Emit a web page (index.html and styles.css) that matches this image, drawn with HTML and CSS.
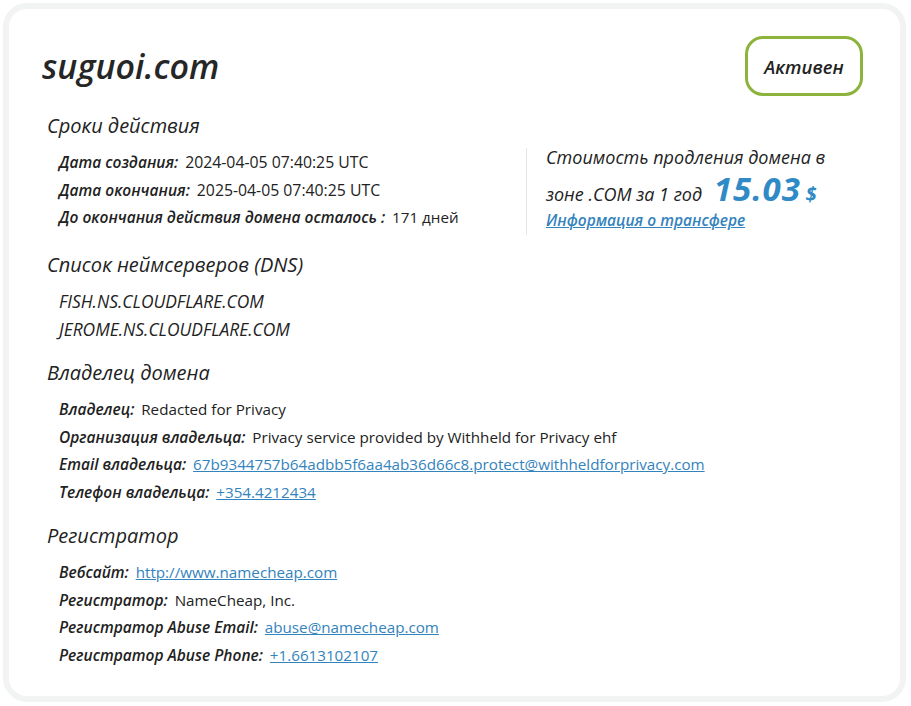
FILE: index.html
```html
<!DOCTYPE html>
<html lang="ru">
<head>
<meta charset="utf-8">
<title>suguoi.com</title>
<link rel="stylesheet" href="styles.css">
</head>
<body>
<div class="card">
  <div class="header">
    <h1 class="domain">suguoi.com</h1>
    <div class="status">Активен</div>
  </div>

  <section class="section">
    <h2 class="heading">Сроки действия</h2>
    <div class="split">
      <div class="rows">
        <div class="row"><span class="label">Дата создания:</span> <span class="value date">2024-04-05 07:40:25 UTC</span></div>
        <div class="row"><span class="label">Дата окончания:</span> <span class="value date">2025-04-05 07:40:25 UTC</span></div>
        <div class="row"><span class="label">До окончания действия домена осталось :</span> <span class="value">171 дней</span></div>
      </div>
      <div class="price">
        <div class="price-text">Стоимость продления домена в<br>зоне .COM за 1 год <span class="amount">15.03</span> <span class="currency">$</span></div>
        <a class="transfer" href="#">Информация о трансфере</a>
      </div>
    </div>
  </section>

  <section class="section">
    <h2 class="heading">Список неймсерверов (DNS)</h2>
    <div class="rows">
      <div class="row ns">FISH.NS.CLOUDFLARE.COM</div>
      <div class="row ns">JEROME.NS.CLOUDFLARE.COM</div>
    </div>
  </section>

  <section class="section">
    <h2 class="heading">Владелец домена</h2>
    <div class="rows">
      <div class="row"><span class="label">Владелец:</span> <span class="value">Redacted for Privacy</span></div>
      <div class="row"><span class="label">Организация владельца:</span> <span class="value">Privacy service provided by Withheld for Privacy ehf</span></div>
      <div class="row"><span class="label">Email владельца:</span> <a class="link" href="#">67b9344757b64adbb5f6aa4ab36d66c8.protect@withheldforprivacy.com</a></div>
      <div class="row"><span class="label">Телефон владельца:</span> <a class="link" href="#">+354.4212434</a></div>
    </div>
  </section>

  <section class="section">
    <h2 class="heading">Регистратор</h2>
    <div class="rows">
      <div class="row"><span class="label">Вебсайт:</span> <a class="link" href="#">http://www.namecheap.com</a></div>
      <div class="row"><span class="label">Регистратор:</span> <span class="value">NameCheap, Inc.</span></div>
      <div class="row"><span class="label">Регистратор Abuse Email:</span> <a class="link" href="#">abuse@namecheap.com</a></div>
      <div class="row"><span class="label">Регистратор Abuse Phone:</span> <a class="link" href="#">+1.6613102107</a></div>
    </div>
  </section>
</div>
</body>
</html>
```

FILE: styles.css
```css
* { box-sizing: border-box; }
html, body { margin: 0; padding: 0; background: #ffffff; }
body {
  padding: 3px 5px 4px 3px;
  font-family: "Open Sans", "Liberation Sans", sans-serif;
  color: #222222;
}
.card {
  border: 6px solid #f2f3f3;
  border-radius: 24px;
  background: #ffffff;
  padding: 27px 36px 20px 36px;
  height: 699px;
}
.header {
  display: flex;
  justify-content: space-between;
  align-items: center;
}
.domain {
  margin: 0 0 0 -3px;
  font-size: 34px;
  font-style: italic;
  font-weight: 600;
  color: #262626;
  letter-spacing: 0;
}
.status {
  width: 118px;
  height: 60px;
  border: 3px solid #8cb43c;
  border-radius: 18px;
  display: flex;
  align-items: center;
  justify-content: center;
  font-style: italic;
  font-size: 18.5px;
  font-weight: 600;
  color: #222;
  margin-right: 1px;
}
.section { margin-top: 16px; }
.heading {
  margin: 0 0 9px 2px;
  font-size: 20px;
  line-height: 28px;
  font-style: italic;
  font-weight: 400;
  color: #222;
}
.rows { padding-left: 14px; }
.row {
  font-size: 15.2px;
  line-height: 27.5px;
  white-space: nowrap;
}
.label {
  font-style: italic;
  font-weight: 600;
  font-size: 15.5px;
  margin-right: 3px;
}
.value { font-weight: 400; color: #222; }
.date { font-size: 15.8px; }
.link { color: #3383bd; text-decoration: underline; }
.ns { font-style: italic; font-weight: 400; font-size: 17.4px; }
.split {
  display: flex;
  align-items: flex-start;
}
.split .rows { width: 481px; flex: none; }
.price {
  margin-top: -1px;
  border-left: 1px solid #e6e6e6;
  padding: 0 0 3px 19px;
  height: 87px;
}
.price-text {
  font-size: 18px;
  font-style: italic;
  line-height: 31px;
  margin-top: -6px;
}
.amount {
  font-size: 33px;
  font-weight: 700;
  color: #2f8ac5;
  margin-left: 7px;
  letter-spacing: 1px;
}
.currency {
  font-size: 20px;
  font-weight: 700;
  color: #2f8ac5;
}
.transfer {
  display: block;
  font-size: 15.5px;
  font-style: italic;
  font-weight: 600;
  color: #3383bd;
  line-height: 20px;
  margin-top: 0;
}
```
